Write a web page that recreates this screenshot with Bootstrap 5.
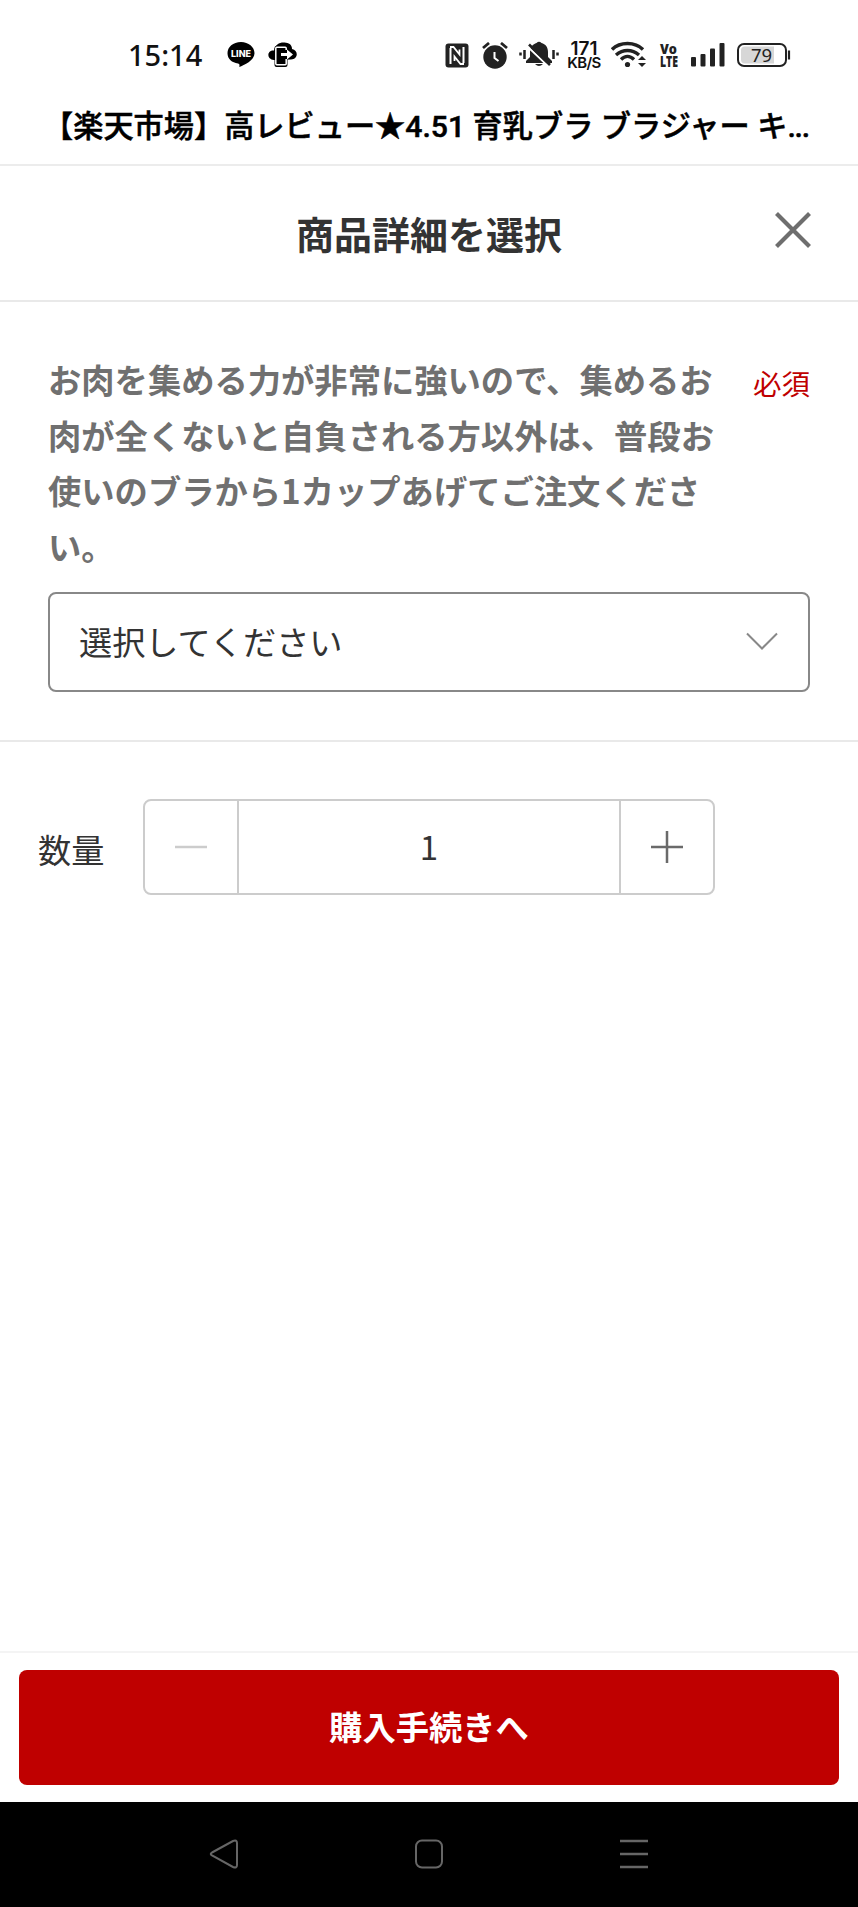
<!DOCTYPE html>
<html lang="ja">
<head>
<meta charset="utf-8">
<meta name="viewport" content="width=device-width, initial-scale=1">
<title>商品詳細を選択</title>
<link href="https://cdn.jsdelivr.net/npm/bootstrap@5.3.0/dist/css/bootstrap.min.css" rel="stylesheet">
<style>
body{font-family:"Noto Sans CJK JP",sans-serif;color:#333;background:#fff;min-height:1907px}
.screen{height:1907px}
.status-bar{height:90px;padding:20px 67px 0 128px;color:#111}
.clock{font:500 29px/1 "Noto Sans","Noto Sans CJK JP",sans-serif;width:99px;padding-bottom:2px}
.transfer{margin-left:13px}
.speed{font:600 19px/15px Inter,sans-serif;width:34px;text-align:center}
.speed small{display:block;font-size:15px;line-height:14px;letter-spacing:-.6px;white-space:nowrap}
.volte{margin-left:12px;width:20px;font:800 14px/13px "Open Sans",sans-serif;color:#222}
.volte svg{overflow:visible}
.page-title{height:76px;padding:1px 46px 0 43px;border-bottom:2px solid #ececec;font:500 30.2px/72px Roboto,"Noto Sans CJK JP",sans-serif;color:#000;white-space:nowrap;-webkit-text-stroke:.5px #000}
.page-title span{letter-spacing:-1.2px}
.sheet-head{height:136px;border-bottom:2px solid #e9e9e9;font-size:38px;font-weight:700;line-height:134px}
.close-btn{right:46px;top:45px;width:38px;height:38px;line-height:0}
.option{height:440px;padding:49px 48px 0;border-bottom:2px solid #e9e9e9}
.option-text{width:670px;font-size:33.3px;line-height:55.7px;font-weight:700;color:#707070;height:241px}
.required{font-size:28.5px;line-height:56px;color:#bf0000;padding-top:4px}
.picker{height:100px;border:2px solid #888;border-radius:8px;padding:0 30px 2px 29px;font-size:33.2px;color:#333}
.qty{padding:57px 0 0 38px}
.qty-label{width:105px;font-size:33.2px;padding-top:4px}
.stepper{width:572px;height:96px;border:2px solid #ccc;border-radius:8px}
.stepper>*{display:flex;align-items:center;justify-content:center}
.step-btn{width:92px}
.step-value{border:solid #ccc;border-width:0 2px;font-size:33px}
.buy-bar{height:151px;border-top:2px solid #f4f4f4;padding:17px 19px 0}
.buy-btn{height:115px;border-radius:8px;background:#bf0000;color:#fff;font-size:33.3px;font-weight:700;border:0;padding:0 0 3px}
.buy-btn:hover{background:#a80000;color:#fff}
.nav-keys{height:105px;background:#000;padding:0 209px 1px}
svg{display:block;flex:none}
</style>
</head>
<body>
<div class="screen d-flex flex-column">
  <div class="status-bar d-flex align-items-center">
    <span class="clock">15:14</span>
    <svg width="28" height="26" viewBox="0 0 28 26"><path d="M14 0C6 0 .5 5 .5 11.2.5 17 5 20.500 11 21.500c2 .4 1.500 1.500 1.300 3.500C17 23 27.500 18.500 27.500 11.200 27.500 5 21.500 0 14 0Z" fill="#000"/><text x="14" y="14.500" fill="#fff" font-family="Inter, sans-serif" font-size="9" font-weight="800" text-anchor="middle" textLength="20" lengthAdjust="spacingAndGlyphs">LINE</text></svg>
    <svg class="transfer" width="29" height="26" viewBox="0 0 29 26"><path d="M6 18C-2 17-1 8 6 8.500 7 2 13-.5 18 .8 22 1 24 4 24 7c6.500 1 6.500 10-1 10.500Z" fill="#000"/><rect x="6.500" y="4" width="13" height="21" rx="2" fill="#000"/><rect x="7.800" y="5.300" width="10.400" height="17.500" rx="1" fill="none" stroke="#fff" stroke-width="1.500"/><path d="M17 8h3v9h-3Z" fill="#000"/><path d="M13 11h6V7.500l6 5-6 5V14h-6Z" fill="#fff"/></svg>
    <div class="d-flex align-items-center ms-auto">
      <svg width="24" height="25" viewBox="0 0 24 25"><rect x=".5" y=".5" width="23" height="24" rx="3" fill="#222"/><path d="M5.500 21V5M18.500 4v16" stroke="#fff" stroke-width="2"/><path d="M5 4h3.500l6 7.500V6.500M19 21h-3.500l-6-7.500V18" fill="none" stroke="#fff" stroke-width="1.800"/></svg>
      <svg style="margin-left:13px" width="26" height="27" viewBox="0 0 26 27"><circle cx="13" cy="15" r="11.700" fill="#222"/><path d="M1 6l6-5M25 6l-6-5" stroke="#222" stroke-width="2.800"/><path d="M12.500 10v6l4 3" fill="none" stroke="#fff" stroke-width="2"/></svg>
      <svg style="margin-left:11px" width="40" height="28" viewBox="0 0 40 28"><path d="M7 22v-2l4-4v-5c0-5 3-8 6.500-9q2.500-2.500 5 0c4 1 6.500 4 6.500 9v5l4 4v2ZM16 23h8q-4 4-8 0" fill="#222"/><path d="M1.500 11.500v3M5.500 9v9M34.500 9v9M38.500 11.500v3" stroke="#222" stroke-width="2.500"/><path d="M8 5l22 21" stroke="#fff" stroke-width="2"/><path d="M10 3.500l21 20.500" stroke="#222" stroke-width="2.600"/></svg>
      <div class="speed" style="margin-left:8px">171<small>KB/S</small></div>
      <svg style="margin-left:10px" width="36" height="28" viewBox="0 0 36 28"><g fill="none" stroke="#222" stroke-width="3.400"><path d="M1 8.500C9 .5 24 .5 32 8.500M5 14c7-6 16-6 23 0M10 18.500c4-4 9-4 13 0"/></g><circle cx="16.500" cy="23.500" r="2.600" fill="#222"/><path d="M27 19l4-4 4 4ZM27 22h8l-4 4Z" fill="#222"/></svg>
      <div class="volte"><svg width="20" height="26" viewBox="0 0 20 26" fill="#222"><text x="1" y="11.500" font-size="14" textLength="17" lengthAdjust="spacingAndGlyphs">Vo</text><text x="1" y="24.500" font-size="15" textLength="18" lengthAdjust="spacingAndGlyphs">LTE</text></svg></div>
      <svg style="margin-left:11px" width="36" height="26" viewBox="0 0 36 26" fill="#222"><rect x="1" y="15" width="5" height="9.500" rx="1"/><rect x="10.500" y="12" width="5" height="12.500" rx="1"/><rect x="20" y="6.500" width="5" height="18" rx="1"/><rect x="29.500" y="1" width="5" height="23.500" rx="1"/></svg>
      <svg style="margin-left:10px" width="55" height="26" viewBox="0 0 55 26"><rect x="2" y="2" width="48" height="22" rx="6" fill="#fff" stroke="#222" stroke-width="2"/><path d="M9 4.500h29v17H9q-4 0-4-4v-9q0-4 4-4" fill="#d7d7d7"/><path d="M53 8.500v9" stroke="#222" stroke-width="2.200"/><text x="25.500" y="19.500" font-family="Noto Sans, sans-serif" font-size="18.500" text-anchor="middle" fill="#222">79</text></svg>
    </div>
  </div>
  <div class="page-title">【楽天市場】高レビュー★4.51 育乳ブラ ブラジャー キ<span>...</span></div>
  <header class="sheet-head position-relative text-center">商品詳細を選択
    <button class="close-btn btn p-0 border-0 position-absolute" aria-label="閉じる"><svg width="38" height="38" viewBox="0 0 38 38"><path d="M2.500 2.500l33 33M35.500 2.500l-33 33" stroke="#6e6e6e" stroke-width="4.200"/></svg></button>
  </header>
  <section class="option">
    <div class="d-flex justify-content-between">
      <div class="option-text">お肉を集める力が非常に強いので、集めるお<br>肉が全くないと自負される方以外は、普段お<br>使いのブラから1カップあげてご注文くださ<br>い。</div>
      <span class="required text-nowrap">必須</span>
    </div>
    <div class="picker d-flex align-items-center justify-content-between"><span>選択してください</span><svg width="32" height="18" viewBox="0 0 32 18"><path d="M1 1.500l15 15 15-15" fill="none" stroke="#888" stroke-width="2"/></svg></div>
  </section>
  <section class="qty d-flex align-items-center">
    <span class="qty-label">数量</span>
    <div class="stepper d-flex">
      <div class="step-btn"><svg width="32" height="32"><path d="M0 16h32" stroke="#ccc" stroke-width="2.500"/></svg></div>
      <div class="step-value flex-fill">1</div>
      <div class="step-btn"><svg width="32" height="32"><path d="M0 16h32M16 0v32" stroke="#6a6a6a" stroke-width="2.500"/></svg></div>
    </div>
  </section>
  <div class="buy-bar mt-auto"><button class="buy-btn btn w-100">購入手続きへ</button></div>
  <nav class="nav-keys d-flex align-items-center justify-content-between">
    <svg width="30" height="30" viewBox="0 0 30 30" fill="none" stroke="#666" stroke-width="2"><path d="M3 13.500L24 2q4-1.500 4 2v22q0 3.500-4 2L3 16.500q-2.500-1.500 0-3Z"/></svg>
    <svg width="30" height="30" viewBox="0 0 30 30" fill="none" stroke="#666" stroke-width="2"><rect x="2" y="1.500" width="26" height="27" rx="6"/></svg>
    <svg width="30" height="30" viewBox="0 0 30 30" stroke="#666" stroke-width="2.500"><path d="M1 2h28M1 15h28M1 28h28"/></svg>
  </nav>
</div>
<script src="https://cdn.jsdelivr.net/npm/bootstrap@5.3.0/dist/js/bootstrap.bundle.min.js"></script>
</body>
</html>
